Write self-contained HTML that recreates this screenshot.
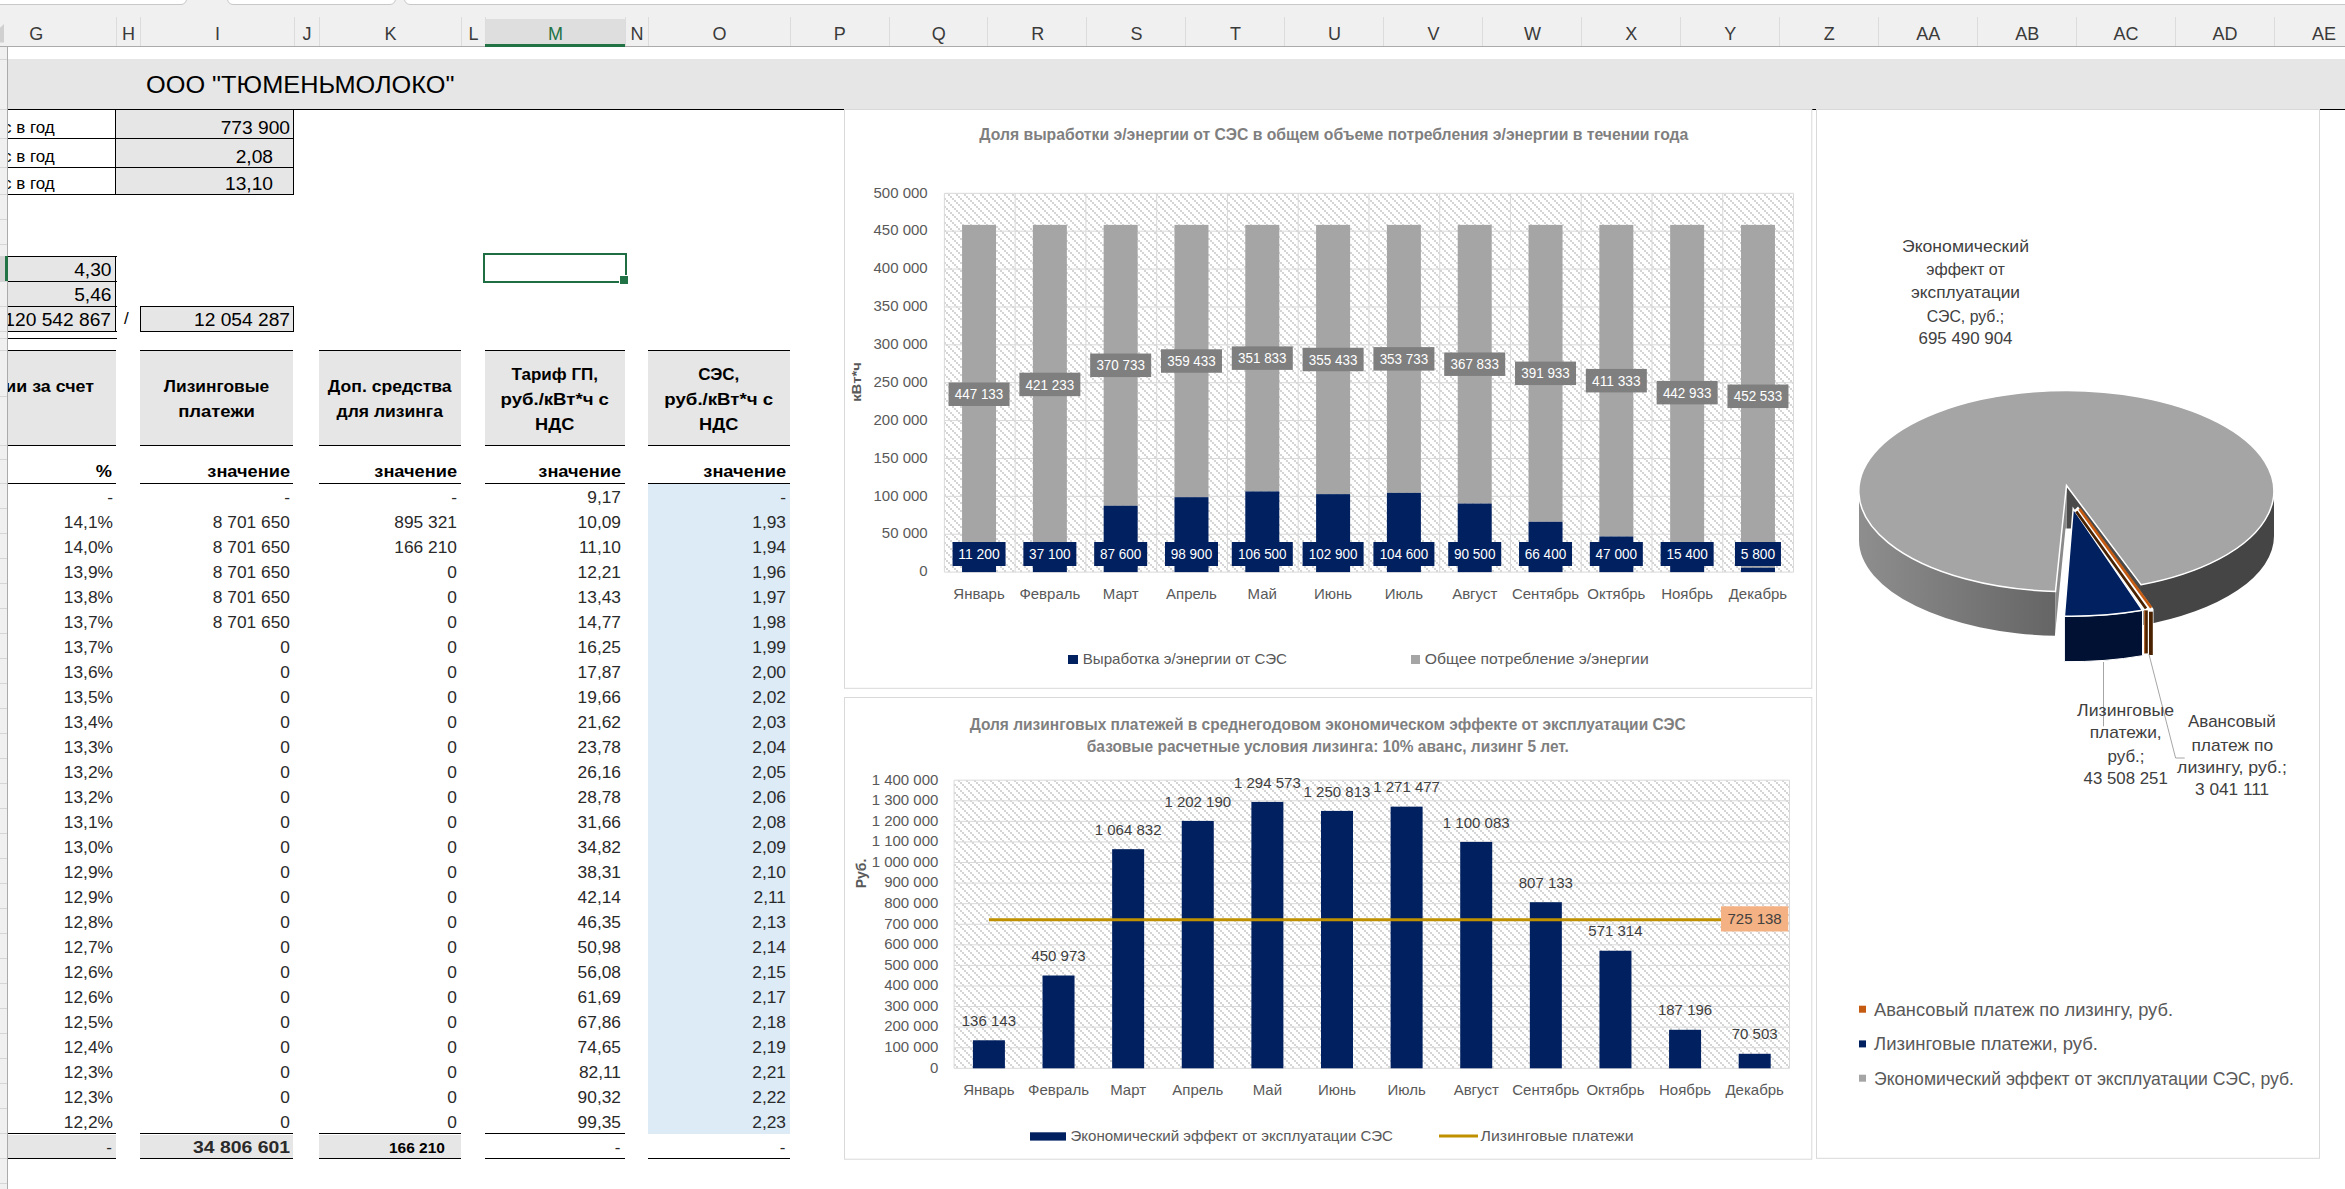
<!DOCTYPE html><html><head><meta charset="utf-8"><style>
html,body{margin:0;padding:0}
body{width:2345px;height:1189px;overflow:hidden;position:relative;background:#fff;font-family:"Liberation Sans",sans-serif;}
.a{position:absolute;white-space:nowrap}
.r{text-align:right}
.c{text-align:center}
.b{font-weight:bold}
</style></head><body>
<div class="a" style="left:0px;top:0px;width:2345px;height:46px;background:#f0f0f0"></div>
<div class="a" style="left:-10px;top:-7px;width:195px;height:10px;background:#fff;border:1px solid #c8c8c8;border-radius:0 0 6px 6px"></div>
<div class="a" style="left:227px;top:-7px;width:167px;height:10px;background:#fff;border:1px solid #c8c8c8;border-radius:0 0 6px 6px"></div>
<div class="a" style="left:404px;top:-7px;width:2000px;height:10px;background:#fff;border:1px solid #c8c8c8;border-radius:0 0 6px 6px"></div>
<div class="a" style="left:485px;top:19px;width:139.5px;height:27px;background:#dedede"></div>
<div class="a" style="left:115.5px;top:17px;width:1px;height:29px;background:#dcdcdc"></div>
<div class="a c" style="left:-43.900000000000006px;top:22px;width:160.2px;font-size:18px;line-height:25px;color:#3a3a3a">G</div>
<div class="a" style="left:140px;top:17px;width:1px;height:29px;background:#dcdcdc"></div>
<div class="a c" style="left:116.3px;top:22px;width:24.5px;font-size:18px;line-height:25px;color:#3a3a3a">H</div>
<div class="a" style="left:293.5px;top:17px;width:1px;height:29px;background:#dcdcdc"></div>
<div class="a c" style="left:140.8px;top:22px;width:153.5px;font-size:18px;line-height:25px;color:#3a3a3a">I</div>
<div class="a" style="left:319px;top:17px;width:1px;height:29px;background:#dcdcdc"></div>
<div class="a c" style="left:294.3px;top:22px;width:25.5px;font-size:18px;line-height:25px;color:#3a3a3a">J</div>
<div class="a" style="left:460.5px;top:17px;width:1px;height:29px;background:#dcdcdc"></div>
<div class="a c" style="left:319.8px;top:22px;width:141.5px;font-size:18px;line-height:25px;color:#3a3a3a">K</div>
<div class="a" style="left:485px;top:17px;width:1px;height:29px;background:#dcdcdc"></div>
<div class="a c" style="left:461.3px;top:22px;width:24.5px;font-size:18px;line-height:25px;color:#3a3a3a">L</div>
<div class="a" style="left:624.5px;top:17px;width:1px;height:29px;background:#dcdcdc"></div>
<div class="a c" style="left:485.8px;top:22px;width:139.5px;font-size:18px;line-height:25px;color:#217346">M</div>
<div class="a" style="left:648px;top:17px;width:1px;height:29px;background:#dcdcdc"></div>
<div class="a c" style="left:625.3px;top:22px;width:23.5px;font-size:18px;line-height:25px;color:#3a3a3a">N</div>
<div class="a" style="left:789.5px;top:17px;width:1px;height:29px;background:#dcdcdc"></div>
<div class="a c" style="left:648.8px;top:22px;width:141.5px;font-size:18px;line-height:25px;color:#3a3a3a">O</div>
<div class="a" style="left:888.5px;top:17px;width:1px;height:29px;background:#dcdcdc"></div>
<div class="a c" style="left:790.3px;top:22px;width:98.95000000000005px;font-size:18px;line-height:25px;color:#3a3a3a">P</div>
<div class="a" style="left:987.4px;top:17px;width:1px;height:29px;background:#dcdcdc"></div>
<div class="a c" style="left:889.25px;top:22px;width:98.95000000000005px;font-size:18px;line-height:25px;color:#3a3a3a">Q</div>
<div class="a" style="left:1086.4px;top:17px;width:1px;height:29px;background:#dcdcdc"></div>
<div class="a c" style="left:988.2px;top:22px;width:98.95000000000005px;font-size:18px;line-height:25px;color:#3a3a3a">R</div>
<div class="a" style="left:1185.3px;top:17px;width:1px;height:29px;background:#dcdcdc"></div>
<div class="a c" style="left:1087.15px;top:22px;width:98.95000000000005px;font-size:18px;line-height:25px;color:#3a3a3a">S</div>
<div class="a" style="left:1284.3px;top:17px;width:1px;height:29px;background:#dcdcdc"></div>
<div class="a c" style="left:1186.1000000000001px;top:22px;width:98.95000000000005px;font-size:18px;line-height:25px;color:#3a3a3a">T</div>
<div class="a" style="left:1383.2px;top:17px;width:1px;height:29px;background:#dcdcdc"></div>
<div class="a c" style="left:1285.0500000000002px;top:22px;width:98.95000000000005px;font-size:18px;line-height:25px;color:#3a3a3a">U</div>
<div class="a" style="left:1482.2px;top:17px;width:1px;height:29px;background:#dcdcdc"></div>
<div class="a c" style="left:1384.0000000000002px;top:22px;width:98.95000000000005px;font-size:18px;line-height:25px;color:#3a3a3a">V</div>
<div class="a" style="left:1581.1px;top:17px;width:1px;height:29px;background:#dcdcdc"></div>
<div class="a c" style="left:1482.9500000000003px;top:22px;width:98.95000000000005px;font-size:18px;line-height:25px;color:#3a3a3a">W</div>
<div class="a" style="left:1680.1px;top:17px;width:1px;height:29px;background:#dcdcdc"></div>
<div class="a c" style="left:1581.9000000000003px;top:22px;width:98.95000000000005px;font-size:18px;line-height:25px;color:#3a3a3a">X</div>
<div class="a" style="left:1779.0px;top:17px;width:1px;height:29px;background:#dcdcdc"></div>
<div class="a c" style="left:1680.8500000000004px;top:22px;width:98.95000000000005px;font-size:18px;line-height:25px;color:#3a3a3a">Y</div>
<div class="a" style="left:1878.0px;top:17px;width:1px;height:29px;background:#dcdcdc"></div>
<div class="a c" style="left:1779.8000000000004px;top:22px;width:98.95000000000005px;font-size:18px;line-height:25px;color:#3a3a3a">Z</div>
<div class="a" style="left:1976.9px;top:17px;width:1px;height:29px;background:#dcdcdc"></div>
<div class="a c" style="left:1878.7500000000005px;top:22px;width:98.95000000000005px;font-size:18px;line-height:25px;color:#3a3a3a">AA</div>
<div class="a" style="left:2075.9px;top:17px;width:1px;height:29px;background:#dcdcdc"></div>
<div class="a c" style="left:1977.7000000000005px;top:22px;width:98.94999999999982px;font-size:18px;line-height:25px;color:#3a3a3a">AB</div>
<div class="a" style="left:2174.8px;top:17px;width:1px;height:29px;background:#dcdcdc"></div>
<div class="a c" style="left:2076.6500000000005px;top:22px;width:98.94999999999982px;font-size:18px;line-height:25px;color:#3a3a3a">AC</div>
<div class="a" style="left:2273.8px;top:17px;width:1px;height:29px;background:#dcdcdc"></div>
<div class="a c" style="left:2175.6000000000004px;top:22px;width:98.94999999999982px;font-size:18px;line-height:25px;color:#3a3a3a">AD</div>
<div class="a" style="left:2372.7px;top:17px;width:1px;height:29px;background:#dcdcdc"></div>
<div class="a c" style="left:2274.55px;top:22px;width:98.94999999999982px;font-size:18px;line-height:25px;color:#3a3a3a">AE</div>
<div class="a" style="left:0px;top:46px;width:2345px;height:1px;background:#ababab"></div>
<div class="a" style="left:485px;top:43.8px;width:139.5px;height:3.1px;background:#217346"></div>
<div class="a" style="left:0;top:24px;width:4px;height:18.5px;background:#d0d0d0;clip-path:polygon(100% 0,100% 100%,0 100%,0 20%)"></div>
<div class="a" style="left:8px;top:59.4px;width:2337px;height:50px;background:#e7e6e6"></div>
<div class="a " style="left:146px;top:67px;font-size:24px;line-height:36px;color:#000;transform:scaleX(1.055);transform-origin:left center">ООО "ТЮМЕНЬМОЛОКО"</div>
<div class="a" style="left:8px;top:109px;width:2337px;height:1px;background:#000"></div>
<div class="a" style="left:115.5px;top:110px;width:178px;height:84.4px;background:#e7e6e6"></div>
<div class="a" style="left:8px;top:138.2px;width:286px;height:1px;background:#000"></div>
<div class="a " style="left:3px;top:116.19999999999999px;font-size:16px;line-height:24px;color:#000;transform:scaleX(1.06);transform-origin:left center">с в год</div>
<div class="a r" style="left:139.5px;top:115.69999999999999px;width:150px;font-size:18px;line-height:24px;color:#000;transform:scaleX(1.066);transform-origin:right center">773 900</div>
<div class="a" style="left:8px;top:167.4px;width:286px;height:1px;background:#000"></div>
<div class="a " style="left:3px;top:145.4px;font-size:16px;line-height:24px;color:#000;transform:scaleX(1.06);transform-origin:left center">с в год</div>
<div class="a r" style="left:123.30000000000001px;top:144.9px;width:150px;font-size:18px;line-height:24px;color:#000;transform:scaleX(1.066);transform-origin:right center">2,08</div>
<div class="a" style="left:8px;top:194.4px;width:286px;height:1px;background:#000"></div>
<div class="a " style="left:3px;top:172.4px;font-size:16px;line-height:24px;color:#000;transform:scaleX(1.06);transform-origin:left center">с в год</div>
<div class="a r" style="left:123.30000000000001px;top:171.9px;width:150px;font-size:18px;line-height:24px;color:#000;transform:scaleX(1.066);transform-origin:right center">13,10</div>
<div class="a" style="left:115px;top:109px;width:1px;height:85.4px;background:#000"></div>
<div class="a" style="left:293px;top:109px;width:1px;height:85.4px;background:#000"></div>
<div class="a" style="left:8px;top:255.5px;width:107.5px;height:75px;background:#e7e6e6"></div>
<div class="a" style="left:8px;top:255.5px;width:108.5px;height:1px;background:#000"></div>
<div class="a" style="left:8px;top:280.5px;width:108.5px;height:1px;background:#000"></div>
<div class="a" style="left:8px;top:305.5px;width:108.5px;height:1px;background:#000"></div>
<div class="a" style="left:8px;top:330.5px;width:108.5px;height:1px;background:#000"></div>
<div class="a" style="left:115px;top:255.5px;width:1px;height:75px;background:#000"></div>
<div class="a r" style="left:0px;top:257.5px;width:111.5px;font-size:18px;line-height:24px;color:#000;transform:scaleX(1.066);transform-origin:right center">4,30</div>
<div class="a r" style="left:0px;top:282.5px;width:111.5px;font-size:18px;line-height:24px;color:#000;transform:scaleX(1.066);transform-origin:right center">5,46</div>
<div class="a r" style="left:-50px;top:307.5px;width:161px;font-size:18px;line-height:24px;color:#000;transform:scaleX(1.066);transform-origin:right center">120 542 867</div>
<div class="a" style="left:8px;top:337.6px;width:108.5px;height:1px;background:#000"></div>
<div class="a " style="left:124px;top:307px;font-size:17px;line-height:24px;color:#000">/</div>
<div class="a" style="left:140.4px;top:305.5px;width:153px;height:25px;background:#e7e6e6;border:1px solid #000;box-sizing:border-box;width:154px;height:26px"></div>
<div class="a r" style="left:139.5px;top:307.5px;width:150px;font-size:18px;line-height:24px;color:#000;transform:scaleX(1.066);transform-origin:right center">12 054 287</div>
<div class="a" style="left:483px;top:253px;width:144px;height:30px;border:2.7px solid #1f6e43;box-sizing:border-box"></div>
<div class="a" style="left:619px;top:275px;width:8px;height:8px;background:#217346;border:1px solid #fff"></div>
<div class="a" style="left:8px;top:350.2px;width:107.5px;height:95px;background:#e7e6e6"></div>
<div class="a" style="left:8px;top:350.2px;width:107.5px;height:1px;background:#000"></div>
<div class="a" style="left:8px;top:445.3px;width:107.5px;height:1px;background:#000"></div>
<div class="a" style="left:8px;top:483.1px;width:107.5px;height:1px;background:#000"></div>
<div class="a" style="left:8px;top:1133px;width:107.5px;height:1px;background:#000"></div>
<div class="a" style="left:8px;top:1134.6px;width:107.5px;height:23.5px;background:#e7e6e6"></div>
<div class="a" style="left:8px;top:1158.2px;width:107.5px;height:1px;background:#000"></div>
<div class="a" style="left:140.4px;top:350.2px;width:153.1px;height:95px;background:#e7e6e6"></div>
<div class="a" style="left:140.4px;top:350.2px;width:153.1px;height:1px;background:#000"></div>
<div class="a" style="left:140.4px;top:445.3px;width:153.1px;height:1px;background:#000"></div>
<div class="a" style="left:140.4px;top:483.1px;width:153.1px;height:1px;background:#000"></div>
<div class="a" style="left:140.4px;top:1133px;width:153.1px;height:1px;background:#000"></div>
<div class="a" style="left:140.4px;top:1134.6px;width:153.1px;height:23.5px;background:#e7e6e6"></div>
<div class="a" style="left:140.4px;top:1158.2px;width:153.1px;height:1px;background:#000"></div>
<div class="a" style="left:319px;top:350.2px;width:141.5px;height:95px;background:#e7e6e6"></div>
<div class="a" style="left:319px;top:350.2px;width:141.5px;height:1px;background:#000"></div>
<div class="a" style="left:319px;top:445.3px;width:141.5px;height:1px;background:#000"></div>
<div class="a" style="left:319px;top:483.1px;width:141.5px;height:1px;background:#000"></div>
<div class="a" style="left:319px;top:1133px;width:141.5px;height:1px;background:#000"></div>
<div class="a" style="left:319px;top:1134.6px;width:141.5px;height:23.5px;background:#e7e6e6"></div>
<div class="a" style="left:319px;top:1158.2px;width:141.5px;height:1px;background:#000"></div>
<div class="a" style="left:485px;top:350.2px;width:139.5px;height:95px;background:#e7e6e6"></div>
<div class="a" style="left:485px;top:350.2px;width:139.5px;height:1px;background:#000"></div>
<div class="a" style="left:485px;top:445.3px;width:139.5px;height:1px;background:#000"></div>
<div class="a" style="left:485px;top:483.1px;width:139.5px;height:1px;background:#000"></div>
<div class="a" style="left:485px;top:1133px;width:139.5px;height:1px;background:#000"></div>
<div class="a" style="left:485px;top:1158.2px;width:139.5px;height:1px;background:#000"></div>
<div class="a" style="left:648px;top:350.2px;width:141.5px;height:95px;background:#e7e6e6"></div>
<div class="a" style="left:648px;top:350.2px;width:141.5px;height:1px;background:#000"></div>
<div class="a" style="left:648px;top:445.3px;width:141.5px;height:1px;background:#000"></div>
<div class="a" style="left:648px;top:483.1px;width:141.5px;height:1px;background:#000"></div>
<div class="a" style="left:648px;top:1133px;width:141.5px;height:1px;background:#000"></div>
<div class="a" style="left:648px;top:1158.2px;width:141.5px;height:1px;background:#000"></div>
<div class="a" style="left:648px;top:484.1px;width:141.5px;height:649.5px;background:#ddebf7"></div>
<div class="a r" style="left:-100px;top:374px;width:194px;font-size:17px;line-height:25px;color:#000;font-weight:bold;transform:scaleX(1.05);transform-origin:right center">ии за счет</div>
<div class="a c" style="left:140.4px;top:374px;width:153px;font-size:17px;line-height:25px;color:#000;font-weight:bold;transform:scaleX(1.02);transform-origin:center center">Лизинговые</div>
<div class="a c" style="left:140.4px;top:399px;width:153px;font-size:17px;line-height:25px;color:#000;font-weight:bold;transform:scaleX(1.087);transform-origin:center center">платежи</div>
<div class="a c" style="left:319px;top:374px;width:141.5px;font-size:17px;line-height:25px;color:#000;font-weight:bold;transform:scaleX(1.034);transform-origin:center center">Доп. средства</div>
<div class="a c" style="left:319px;top:399px;width:141.5px;font-size:17px;line-height:25px;color:#000;font-weight:bold;transform:scaleX(1.03);transform-origin:center center">для лизинга</div>
<div class="a c" style="left:485px;top:361.5px;width:139.5px;font-size:17px;line-height:25px;color:#000;font-weight:bold;transform:scaleX(1.0);transform-origin:center center">Тариф ГП,</div>
<div class="a c" style="left:485px;top:386.5px;width:139.5px;font-size:17px;line-height:25px;color:#000;font-weight:bold;transform:scaleX(1.094);transform-origin:center center">руб./кВт*ч с</div>
<div class="a c" style="left:485px;top:411.5px;width:139.5px;font-size:17px;line-height:25px;color:#000;font-weight:bold;transform:scaleX(1.07);transform-origin:center center">НДС</div>
<div class="a c" style="left:648px;top:361.5px;width:141.5px;font-size:17px;line-height:25px;color:#000;font-weight:bold;transform:scaleX(1.0);transform-origin:center center">СЭС,</div>
<div class="a c" style="left:648px;top:386.5px;width:141.5px;font-size:17px;line-height:25px;color:#000;font-weight:bold;transform:scaleX(1.098);transform-origin:center center">руб./кВт*ч с</div>
<div class="a c" style="left:648px;top:411.5px;width:141.5px;font-size:17px;line-height:25px;color:#000;font-weight:bold;transform:scaleX(1.07);transform-origin:center center">НДС</div>
<div class="a r" style="left:-88.0px;top:459px;width:200px;font-size:17px;line-height:25px;color:#000;font-weight:bold;transform:scaleX(1.07);transform-origin:right center">%</div>
<div class="a r" style="left:90.0px;top:459px;width:200px;font-size:17px;line-height:25px;color:#000;font-weight:bold;transform:scaleX(1.07);transform-origin:right center">значение</div>
<div class="a r" style="left:257.0px;top:459px;width:200px;font-size:17px;line-height:25px;color:#000;font-weight:bold;transform:scaleX(1.07);transform-origin:right center">значение</div>
<div class="a r" style="left:421.0px;top:459px;width:200px;font-size:17px;line-height:25px;color:#000;font-weight:bold;transform:scaleX(1.07);transform-origin:right center">значение</div>
<div class="a r" style="left:586.0px;top:459px;width:200px;font-size:17px;line-height:25px;color:#000;font-weight:bold;transform:scaleX(1.07);transform-origin:right center">значение</div>
<div class="a r" style="left:-37px;top:485.1px;width:150px;font-size:17px;line-height:25px;color:#2a2a2a;transform:scaleX(1.02);transform-origin:right center">-</div>
<div class="a r" style="left:139.60000000000002px;top:485.1px;width:150px;font-size:17px;line-height:25px;color:#2a2a2a;transform:scaleX(1.02);transform-origin:right center">-</div>
<div class="a r" style="left:306.5px;top:485.1px;width:150px;font-size:17px;line-height:25px;color:#2a2a2a;transform:scaleX(1.02);transform-origin:right center">-</div>
<div class="a r" style="left:470.5px;top:485.1px;width:150px;font-size:17px;line-height:25px;color:#2a2a2a;transform:scaleX(1.02);transform-origin:right center">9,17</div>
<div class="a r" style="left:635.5px;top:485.1px;width:150px;font-size:17px;line-height:25px;color:#2a2a2a;transform:scaleX(1.02);transform-origin:right center">-</div>
<div class="a r" style="left:-37px;top:510.1px;width:150px;font-size:17px;line-height:25px;color:#2a2a2a;transform:scaleX(1.02);transform-origin:right center">14,1%</div>
<div class="a r" style="left:139.60000000000002px;top:510.1px;width:150px;font-size:17px;line-height:25px;color:#2a2a2a;transform:scaleX(1.02);transform-origin:right center">8 701 650</div>
<div class="a r" style="left:306.5px;top:510.1px;width:150px;font-size:17px;line-height:25px;color:#2a2a2a;transform:scaleX(1.02);transform-origin:right center">895 321</div>
<div class="a r" style="left:470.5px;top:510.1px;width:150px;font-size:17px;line-height:25px;color:#2a2a2a;transform:scaleX(1.02);transform-origin:right center">10,09</div>
<div class="a r" style="left:635.5px;top:510.1px;width:150px;font-size:17px;line-height:25px;color:#2a2a2a;transform:scaleX(1.02);transform-origin:right center">1,93</div>
<div class="a r" style="left:-37px;top:535.1px;width:150px;font-size:17px;line-height:25px;color:#2a2a2a;transform:scaleX(1.02);transform-origin:right center">14,0%</div>
<div class="a r" style="left:139.60000000000002px;top:535.1px;width:150px;font-size:17px;line-height:25px;color:#2a2a2a;transform:scaleX(1.02);transform-origin:right center">8 701 650</div>
<div class="a r" style="left:306.5px;top:535.1px;width:150px;font-size:17px;line-height:25px;color:#2a2a2a;transform:scaleX(1.02);transform-origin:right center">166 210</div>
<div class="a r" style="left:470.5px;top:535.1px;width:150px;font-size:17px;line-height:25px;color:#2a2a2a;transform:scaleX(1.02);transform-origin:right center">11,10</div>
<div class="a r" style="left:635.5px;top:535.1px;width:150px;font-size:17px;line-height:25px;color:#2a2a2a;transform:scaleX(1.02);transform-origin:right center">1,94</div>
<div class="a r" style="left:-37px;top:560.1px;width:150px;font-size:17px;line-height:25px;color:#2a2a2a;transform:scaleX(1.02);transform-origin:right center">13,9%</div>
<div class="a r" style="left:139.60000000000002px;top:560.1px;width:150px;font-size:17px;line-height:25px;color:#2a2a2a;transform:scaleX(1.02);transform-origin:right center">8 701 650</div>
<div class="a r" style="left:306.5px;top:560.1px;width:150px;font-size:17px;line-height:25px;color:#2a2a2a;transform:scaleX(1.02);transform-origin:right center">0</div>
<div class="a r" style="left:470.5px;top:560.1px;width:150px;font-size:17px;line-height:25px;color:#2a2a2a;transform:scaleX(1.02);transform-origin:right center">12,21</div>
<div class="a r" style="left:635.5px;top:560.1px;width:150px;font-size:17px;line-height:25px;color:#2a2a2a;transform:scaleX(1.02);transform-origin:right center">1,96</div>
<div class="a r" style="left:-37px;top:585.1px;width:150px;font-size:17px;line-height:25px;color:#2a2a2a;transform:scaleX(1.02);transform-origin:right center">13,8%</div>
<div class="a r" style="left:139.60000000000002px;top:585.1px;width:150px;font-size:17px;line-height:25px;color:#2a2a2a;transform:scaleX(1.02);transform-origin:right center">8 701 650</div>
<div class="a r" style="left:306.5px;top:585.1px;width:150px;font-size:17px;line-height:25px;color:#2a2a2a;transform:scaleX(1.02);transform-origin:right center">0</div>
<div class="a r" style="left:470.5px;top:585.1px;width:150px;font-size:17px;line-height:25px;color:#2a2a2a;transform:scaleX(1.02);transform-origin:right center">13,43</div>
<div class="a r" style="left:635.5px;top:585.1px;width:150px;font-size:17px;line-height:25px;color:#2a2a2a;transform:scaleX(1.02);transform-origin:right center">1,97</div>
<div class="a r" style="left:-37px;top:610.1px;width:150px;font-size:17px;line-height:25px;color:#2a2a2a;transform:scaleX(1.02);transform-origin:right center">13,7%</div>
<div class="a r" style="left:139.60000000000002px;top:610.1px;width:150px;font-size:17px;line-height:25px;color:#2a2a2a;transform:scaleX(1.02);transform-origin:right center">8 701 650</div>
<div class="a r" style="left:306.5px;top:610.1px;width:150px;font-size:17px;line-height:25px;color:#2a2a2a;transform:scaleX(1.02);transform-origin:right center">0</div>
<div class="a r" style="left:470.5px;top:610.1px;width:150px;font-size:17px;line-height:25px;color:#2a2a2a;transform:scaleX(1.02);transform-origin:right center">14,77</div>
<div class="a r" style="left:635.5px;top:610.1px;width:150px;font-size:17px;line-height:25px;color:#2a2a2a;transform:scaleX(1.02);transform-origin:right center">1,98</div>
<div class="a r" style="left:-37px;top:635.1px;width:150px;font-size:17px;line-height:25px;color:#2a2a2a;transform:scaleX(1.02);transform-origin:right center">13,7%</div>
<div class="a r" style="left:139.60000000000002px;top:635.1px;width:150px;font-size:17px;line-height:25px;color:#2a2a2a;transform:scaleX(1.02);transform-origin:right center">0</div>
<div class="a r" style="left:306.5px;top:635.1px;width:150px;font-size:17px;line-height:25px;color:#2a2a2a;transform:scaleX(1.02);transform-origin:right center">0</div>
<div class="a r" style="left:470.5px;top:635.1px;width:150px;font-size:17px;line-height:25px;color:#2a2a2a;transform:scaleX(1.02);transform-origin:right center">16,25</div>
<div class="a r" style="left:635.5px;top:635.1px;width:150px;font-size:17px;line-height:25px;color:#2a2a2a;transform:scaleX(1.02);transform-origin:right center">1,99</div>
<div class="a r" style="left:-37px;top:660.1px;width:150px;font-size:17px;line-height:25px;color:#2a2a2a;transform:scaleX(1.02);transform-origin:right center">13,6%</div>
<div class="a r" style="left:139.60000000000002px;top:660.1px;width:150px;font-size:17px;line-height:25px;color:#2a2a2a;transform:scaleX(1.02);transform-origin:right center">0</div>
<div class="a r" style="left:306.5px;top:660.1px;width:150px;font-size:17px;line-height:25px;color:#2a2a2a;transform:scaleX(1.02);transform-origin:right center">0</div>
<div class="a r" style="left:470.5px;top:660.1px;width:150px;font-size:17px;line-height:25px;color:#2a2a2a;transform:scaleX(1.02);transform-origin:right center">17,87</div>
<div class="a r" style="left:635.5px;top:660.1px;width:150px;font-size:17px;line-height:25px;color:#2a2a2a;transform:scaleX(1.02);transform-origin:right center">2,00</div>
<div class="a r" style="left:-37px;top:685.1px;width:150px;font-size:17px;line-height:25px;color:#2a2a2a;transform:scaleX(1.02);transform-origin:right center">13,5%</div>
<div class="a r" style="left:139.60000000000002px;top:685.1px;width:150px;font-size:17px;line-height:25px;color:#2a2a2a;transform:scaleX(1.02);transform-origin:right center">0</div>
<div class="a r" style="left:306.5px;top:685.1px;width:150px;font-size:17px;line-height:25px;color:#2a2a2a;transform:scaleX(1.02);transform-origin:right center">0</div>
<div class="a r" style="left:470.5px;top:685.1px;width:150px;font-size:17px;line-height:25px;color:#2a2a2a;transform:scaleX(1.02);transform-origin:right center">19,66</div>
<div class="a r" style="left:635.5px;top:685.1px;width:150px;font-size:17px;line-height:25px;color:#2a2a2a;transform:scaleX(1.02);transform-origin:right center">2,02</div>
<div class="a r" style="left:-37px;top:710.1px;width:150px;font-size:17px;line-height:25px;color:#2a2a2a;transform:scaleX(1.02);transform-origin:right center">13,4%</div>
<div class="a r" style="left:139.60000000000002px;top:710.1px;width:150px;font-size:17px;line-height:25px;color:#2a2a2a;transform:scaleX(1.02);transform-origin:right center">0</div>
<div class="a r" style="left:306.5px;top:710.1px;width:150px;font-size:17px;line-height:25px;color:#2a2a2a;transform:scaleX(1.02);transform-origin:right center">0</div>
<div class="a r" style="left:470.5px;top:710.1px;width:150px;font-size:17px;line-height:25px;color:#2a2a2a;transform:scaleX(1.02);transform-origin:right center">21,62</div>
<div class="a r" style="left:635.5px;top:710.1px;width:150px;font-size:17px;line-height:25px;color:#2a2a2a;transform:scaleX(1.02);transform-origin:right center">2,03</div>
<div class="a r" style="left:-37px;top:735.1px;width:150px;font-size:17px;line-height:25px;color:#2a2a2a;transform:scaleX(1.02);transform-origin:right center">13,3%</div>
<div class="a r" style="left:139.60000000000002px;top:735.1px;width:150px;font-size:17px;line-height:25px;color:#2a2a2a;transform:scaleX(1.02);transform-origin:right center">0</div>
<div class="a r" style="left:306.5px;top:735.1px;width:150px;font-size:17px;line-height:25px;color:#2a2a2a;transform:scaleX(1.02);transform-origin:right center">0</div>
<div class="a r" style="left:470.5px;top:735.1px;width:150px;font-size:17px;line-height:25px;color:#2a2a2a;transform:scaleX(1.02);transform-origin:right center">23,78</div>
<div class="a r" style="left:635.5px;top:735.1px;width:150px;font-size:17px;line-height:25px;color:#2a2a2a;transform:scaleX(1.02);transform-origin:right center">2,04</div>
<div class="a r" style="left:-37px;top:760.1px;width:150px;font-size:17px;line-height:25px;color:#2a2a2a;transform:scaleX(1.02);transform-origin:right center">13,2%</div>
<div class="a r" style="left:139.60000000000002px;top:760.1px;width:150px;font-size:17px;line-height:25px;color:#2a2a2a;transform:scaleX(1.02);transform-origin:right center">0</div>
<div class="a r" style="left:306.5px;top:760.1px;width:150px;font-size:17px;line-height:25px;color:#2a2a2a;transform:scaleX(1.02);transform-origin:right center">0</div>
<div class="a r" style="left:470.5px;top:760.1px;width:150px;font-size:17px;line-height:25px;color:#2a2a2a;transform:scaleX(1.02);transform-origin:right center">26,16</div>
<div class="a r" style="left:635.5px;top:760.1px;width:150px;font-size:17px;line-height:25px;color:#2a2a2a;transform:scaleX(1.02);transform-origin:right center">2,05</div>
<div class="a r" style="left:-37px;top:785.1px;width:150px;font-size:17px;line-height:25px;color:#2a2a2a;transform:scaleX(1.02);transform-origin:right center">13,2%</div>
<div class="a r" style="left:139.60000000000002px;top:785.1px;width:150px;font-size:17px;line-height:25px;color:#2a2a2a;transform:scaleX(1.02);transform-origin:right center">0</div>
<div class="a r" style="left:306.5px;top:785.1px;width:150px;font-size:17px;line-height:25px;color:#2a2a2a;transform:scaleX(1.02);transform-origin:right center">0</div>
<div class="a r" style="left:470.5px;top:785.1px;width:150px;font-size:17px;line-height:25px;color:#2a2a2a;transform:scaleX(1.02);transform-origin:right center">28,78</div>
<div class="a r" style="left:635.5px;top:785.1px;width:150px;font-size:17px;line-height:25px;color:#2a2a2a;transform:scaleX(1.02);transform-origin:right center">2,06</div>
<div class="a r" style="left:-37px;top:810.1px;width:150px;font-size:17px;line-height:25px;color:#2a2a2a;transform:scaleX(1.02);transform-origin:right center">13,1%</div>
<div class="a r" style="left:139.60000000000002px;top:810.1px;width:150px;font-size:17px;line-height:25px;color:#2a2a2a;transform:scaleX(1.02);transform-origin:right center">0</div>
<div class="a r" style="left:306.5px;top:810.1px;width:150px;font-size:17px;line-height:25px;color:#2a2a2a;transform:scaleX(1.02);transform-origin:right center">0</div>
<div class="a r" style="left:470.5px;top:810.1px;width:150px;font-size:17px;line-height:25px;color:#2a2a2a;transform:scaleX(1.02);transform-origin:right center">31,66</div>
<div class="a r" style="left:635.5px;top:810.1px;width:150px;font-size:17px;line-height:25px;color:#2a2a2a;transform:scaleX(1.02);transform-origin:right center">2,08</div>
<div class="a r" style="left:-37px;top:835.1px;width:150px;font-size:17px;line-height:25px;color:#2a2a2a;transform:scaleX(1.02);transform-origin:right center">13,0%</div>
<div class="a r" style="left:139.60000000000002px;top:835.1px;width:150px;font-size:17px;line-height:25px;color:#2a2a2a;transform:scaleX(1.02);transform-origin:right center">0</div>
<div class="a r" style="left:306.5px;top:835.1px;width:150px;font-size:17px;line-height:25px;color:#2a2a2a;transform:scaleX(1.02);transform-origin:right center">0</div>
<div class="a r" style="left:470.5px;top:835.1px;width:150px;font-size:17px;line-height:25px;color:#2a2a2a;transform:scaleX(1.02);transform-origin:right center">34,82</div>
<div class="a r" style="left:635.5px;top:835.1px;width:150px;font-size:17px;line-height:25px;color:#2a2a2a;transform:scaleX(1.02);transform-origin:right center">2,09</div>
<div class="a r" style="left:-37px;top:860.1px;width:150px;font-size:17px;line-height:25px;color:#2a2a2a;transform:scaleX(1.02);transform-origin:right center">12,9%</div>
<div class="a r" style="left:139.60000000000002px;top:860.1px;width:150px;font-size:17px;line-height:25px;color:#2a2a2a;transform:scaleX(1.02);transform-origin:right center">0</div>
<div class="a r" style="left:306.5px;top:860.1px;width:150px;font-size:17px;line-height:25px;color:#2a2a2a;transform:scaleX(1.02);transform-origin:right center">0</div>
<div class="a r" style="left:470.5px;top:860.1px;width:150px;font-size:17px;line-height:25px;color:#2a2a2a;transform:scaleX(1.02);transform-origin:right center">38,31</div>
<div class="a r" style="left:635.5px;top:860.1px;width:150px;font-size:17px;line-height:25px;color:#2a2a2a;transform:scaleX(1.02);transform-origin:right center">2,10</div>
<div class="a r" style="left:-37px;top:885.1px;width:150px;font-size:17px;line-height:25px;color:#2a2a2a;transform:scaleX(1.02);transform-origin:right center">12,9%</div>
<div class="a r" style="left:139.60000000000002px;top:885.1px;width:150px;font-size:17px;line-height:25px;color:#2a2a2a;transform:scaleX(1.02);transform-origin:right center">0</div>
<div class="a r" style="left:306.5px;top:885.1px;width:150px;font-size:17px;line-height:25px;color:#2a2a2a;transform:scaleX(1.02);transform-origin:right center">0</div>
<div class="a r" style="left:470.5px;top:885.1px;width:150px;font-size:17px;line-height:25px;color:#2a2a2a;transform:scaleX(1.02);transform-origin:right center">42,14</div>
<div class="a r" style="left:635.5px;top:885.1px;width:150px;font-size:17px;line-height:25px;color:#2a2a2a;transform:scaleX(1.02);transform-origin:right center">2,11</div>
<div class="a r" style="left:-37px;top:910.1px;width:150px;font-size:17px;line-height:25px;color:#2a2a2a;transform:scaleX(1.02);transform-origin:right center">12,8%</div>
<div class="a r" style="left:139.60000000000002px;top:910.1px;width:150px;font-size:17px;line-height:25px;color:#2a2a2a;transform:scaleX(1.02);transform-origin:right center">0</div>
<div class="a r" style="left:306.5px;top:910.1px;width:150px;font-size:17px;line-height:25px;color:#2a2a2a;transform:scaleX(1.02);transform-origin:right center">0</div>
<div class="a r" style="left:470.5px;top:910.1px;width:150px;font-size:17px;line-height:25px;color:#2a2a2a;transform:scaleX(1.02);transform-origin:right center">46,35</div>
<div class="a r" style="left:635.5px;top:910.1px;width:150px;font-size:17px;line-height:25px;color:#2a2a2a;transform:scaleX(1.02);transform-origin:right center">2,13</div>
<div class="a r" style="left:-37px;top:935.1px;width:150px;font-size:17px;line-height:25px;color:#2a2a2a;transform:scaleX(1.02);transform-origin:right center">12,7%</div>
<div class="a r" style="left:139.60000000000002px;top:935.1px;width:150px;font-size:17px;line-height:25px;color:#2a2a2a;transform:scaleX(1.02);transform-origin:right center">0</div>
<div class="a r" style="left:306.5px;top:935.1px;width:150px;font-size:17px;line-height:25px;color:#2a2a2a;transform:scaleX(1.02);transform-origin:right center">0</div>
<div class="a r" style="left:470.5px;top:935.1px;width:150px;font-size:17px;line-height:25px;color:#2a2a2a;transform:scaleX(1.02);transform-origin:right center">50,98</div>
<div class="a r" style="left:635.5px;top:935.1px;width:150px;font-size:17px;line-height:25px;color:#2a2a2a;transform:scaleX(1.02);transform-origin:right center">2,14</div>
<div class="a r" style="left:-37px;top:960.1px;width:150px;font-size:17px;line-height:25px;color:#2a2a2a;transform:scaleX(1.02);transform-origin:right center">12,6%</div>
<div class="a r" style="left:139.60000000000002px;top:960.1px;width:150px;font-size:17px;line-height:25px;color:#2a2a2a;transform:scaleX(1.02);transform-origin:right center">0</div>
<div class="a r" style="left:306.5px;top:960.1px;width:150px;font-size:17px;line-height:25px;color:#2a2a2a;transform:scaleX(1.02);transform-origin:right center">0</div>
<div class="a r" style="left:470.5px;top:960.1px;width:150px;font-size:17px;line-height:25px;color:#2a2a2a;transform:scaleX(1.02);transform-origin:right center">56,08</div>
<div class="a r" style="left:635.5px;top:960.1px;width:150px;font-size:17px;line-height:25px;color:#2a2a2a;transform:scaleX(1.02);transform-origin:right center">2,15</div>
<div class="a r" style="left:-37px;top:985.1px;width:150px;font-size:17px;line-height:25px;color:#2a2a2a;transform:scaleX(1.02);transform-origin:right center">12,6%</div>
<div class="a r" style="left:139.60000000000002px;top:985.1px;width:150px;font-size:17px;line-height:25px;color:#2a2a2a;transform:scaleX(1.02);transform-origin:right center">0</div>
<div class="a r" style="left:306.5px;top:985.1px;width:150px;font-size:17px;line-height:25px;color:#2a2a2a;transform:scaleX(1.02);transform-origin:right center">0</div>
<div class="a r" style="left:470.5px;top:985.1px;width:150px;font-size:17px;line-height:25px;color:#2a2a2a;transform:scaleX(1.02);transform-origin:right center">61,69</div>
<div class="a r" style="left:635.5px;top:985.1px;width:150px;font-size:17px;line-height:25px;color:#2a2a2a;transform:scaleX(1.02);transform-origin:right center">2,17</div>
<div class="a r" style="left:-37px;top:1010.1px;width:150px;font-size:17px;line-height:25px;color:#2a2a2a;transform:scaleX(1.02);transform-origin:right center">12,5%</div>
<div class="a r" style="left:139.60000000000002px;top:1010.1px;width:150px;font-size:17px;line-height:25px;color:#2a2a2a;transform:scaleX(1.02);transform-origin:right center">0</div>
<div class="a r" style="left:306.5px;top:1010.1px;width:150px;font-size:17px;line-height:25px;color:#2a2a2a;transform:scaleX(1.02);transform-origin:right center">0</div>
<div class="a r" style="left:470.5px;top:1010.1px;width:150px;font-size:17px;line-height:25px;color:#2a2a2a;transform:scaleX(1.02);transform-origin:right center">67,86</div>
<div class="a r" style="left:635.5px;top:1010.1px;width:150px;font-size:17px;line-height:25px;color:#2a2a2a;transform:scaleX(1.02);transform-origin:right center">2,18</div>
<div class="a r" style="left:-37px;top:1035.1px;width:150px;font-size:17px;line-height:25px;color:#2a2a2a;transform:scaleX(1.02);transform-origin:right center">12,4%</div>
<div class="a r" style="left:139.60000000000002px;top:1035.1px;width:150px;font-size:17px;line-height:25px;color:#2a2a2a;transform:scaleX(1.02);transform-origin:right center">0</div>
<div class="a r" style="left:306.5px;top:1035.1px;width:150px;font-size:17px;line-height:25px;color:#2a2a2a;transform:scaleX(1.02);transform-origin:right center">0</div>
<div class="a r" style="left:470.5px;top:1035.1px;width:150px;font-size:17px;line-height:25px;color:#2a2a2a;transform:scaleX(1.02);transform-origin:right center">74,65</div>
<div class="a r" style="left:635.5px;top:1035.1px;width:150px;font-size:17px;line-height:25px;color:#2a2a2a;transform:scaleX(1.02);transform-origin:right center">2,19</div>
<div class="a r" style="left:-37px;top:1060.1px;width:150px;font-size:17px;line-height:25px;color:#2a2a2a;transform:scaleX(1.02);transform-origin:right center">12,3%</div>
<div class="a r" style="left:139.60000000000002px;top:1060.1px;width:150px;font-size:17px;line-height:25px;color:#2a2a2a;transform:scaleX(1.02);transform-origin:right center">0</div>
<div class="a r" style="left:306.5px;top:1060.1px;width:150px;font-size:17px;line-height:25px;color:#2a2a2a;transform:scaleX(1.02);transform-origin:right center">0</div>
<div class="a r" style="left:470.5px;top:1060.1px;width:150px;font-size:17px;line-height:25px;color:#2a2a2a;transform:scaleX(1.02);transform-origin:right center">82,11</div>
<div class="a r" style="left:635.5px;top:1060.1px;width:150px;font-size:17px;line-height:25px;color:#2a2a2a;transform:scaleX(1.02);transform-origin:right center">2,21</div>
<div class="a r" style="left:-37px;top:1085.1px;width:150px;font-size:17px;line-height:25px;color:#2a2a2a;transform:scaleX(1.02);transform-origin:right center">12,3%</div>
<div class="a r" style="left:139.60000000000002px;top:1085.1px;width:150px;font-size:17px;line-height:25px;color:#2a2a2a;transform:scaleX(1.02);transform-origin:right center">0</div>
<div class="a r" style="left:306.5px;top:1085.1px;width:150px;font-size:17px;line-height:25px;color:#2a2a2a;transform:scaleX(1.02);transform-origin:right center">0</div>
<div class="a r" style="left:470.5px;top:1085.1px;width:150px;font-size:17px;line-height:25px;color:#2a2a2a;transform:scaleX(1.02);transform-origin:right center">90,32</div>
<div class="a r" style="left:635.5px;top:1085.1px;width:150px;font-size:17px;line-height:25px;color:#2a2a2a;transform:scaleX(1.02);transform-origin:right center">2,22</div>
<div class="a r" style="left:-37px;top:1110.1px;width:150px;font-size:17px;line-height:25px;color:#2a2a2a;transform:scaleX(1.02);transform-origin:right center">12,2%</div>
<div class="a r" style="left:139.60000000000002px;top:1110.1px;width:150px;font-size:17px;line-height:25px;color:#2a2a2a;transform:scaleX(1.02);transform-origin:right center">0</div>
<div class="a r" style="left:306.5px;top:1110.1px;width:150px;font-size:17px;line-height:25px;color:#2a2a2a;transform:scaleX(1.02);transform-origin:right center">0</div>
<div class="a r" style="left:470.5px;top:1110.1px;width:150px;font-size:17px;line-height:25px;color:#2a2a2a;transform:scaleX(1.02);transform-origin:right center">99,35</div>
<div class="a r" style="left:635.5px;top:1110.1px;width:150px;font-size:17px;line-height:25px;color:#2a2a2a;transform:scaleX(1.02);transform-origin:right center">2,23</div>
<div class="a r" style="left:-38px;top:1134.5px;width:150px;font-size:17px;line-height:25px;color:#2a2a2a">-</div>
<div class="a r" style="left:139.60000000000002px;top:1134.5px;width:150px;font-size:17px;line-height:25px;color:#2a2a2a;font-weight:bold;transform:scaleX(1.14);transform-origin:right center">34 806 601</div>
<div class="a r" style="left:294.5px;top:1136.0px;width:150px;font-size:14.5px;line-height:25px;color:#000;font-weight:bold;transform:scaleX(1.07);transform-origin:right center">166 210</div>
<div class="a r" style="left:470.5px;top:1134.5px;width:150px;font-size:17px;line-height:25px;color:#2a2a2a">-</div>
<div class="a r" style="left:635.5px;top:1134.5px;width:150px;font-size:17px;line-height:25px;color:#2a2a2a">-</div>
<div class="a" style="left:0px;top:47px;width:7px;height:1142px;background:#f0f0f0"></div>
<div class="a" style="left:7px;top:47px;width:1px;height:1142px;background:#ababab"></div>
<div class="a" style="left:0px;top:59.4px;width:7px;height:1px;background:#d6d6d6"></div>
<div class="a" style="left:0px;top:109px;width:7px;height:1px;background:#d6d6d6"></div>
<div class="a" style="left:0px;top:138.2px;width:7px;height:1px;background:#d6d6d6"></div>
<div class="a" style="left:0px;top:167.4px;width:7px;height:1px;background:#d6d6d6"></div>
<div class="a" style="left:0px;top:194.4px;width:7px;height:1px;background:#d6d6d6"></div>
<div class="a" style="left:0px;top:219.3px;width:7px;height:1px;background:#d6d6d6"></div>
<div class="a" style="left:0px;top:244.2px;width:7px;height:1px;background:#d6d6d6"></div>
<div class="a" style="left:0px;top:255.5px;width:7px;height:1px;background:#d6d6d6"></div>
<div class="a" style="left:0px;top:280.5px;width:7px;height:1px;background:#d6d6d6"></div>
<div class="a" style="left:0px;top:305.5px;width:7px;height:1px;background:#d6d6d6"></div>
<div class="a" style="left:0px;top:330.5px;width:7px;height:1px;background:#d6d6d6"></div>
<div class="a" style="left:0px;top:337.6px;width:7px;height:1px;background:#d6d6d6"></div>
<div class="a" style="left:0px;top:350.2px;width:7px;height:1px;background:#d6d6d6"></div>
<div class="a" style="left:0px;top:395.6px;width:7px;height:1px;background:#d6d6d6"></div>
<div class="a" style="left:0px;top:445.3px;width:7px;height:1px;background:#d6d6d6"></div>
<div class="a" style="left:0px;top:458.7px;width:7px;height:1px;background:#d6d6d6"></div>
<div class="a" style="left:0px;top:483.1px;width:7px;height:1px;background:#d6d6d6"></div>
<div class="a" style="left:0px;top:508.1px;width:7px;height:1px;background:#d6d6d6"></div>
<div class="a" style="left:0px;top:533.1px;width:7px;height:1px;background:#d6d6d6"></div>
<div class="a" style="left:0px;top:558.1px;width:7px;height:1px;background:#d6d6d6"></div>
<div class="a" style="left:0px;top:583.1px;width:7px;height:1px;background:#d6d6d6"></div>
<div class="a" style="left:0px;top:608.1px;width:7px;height:1px;background:#d6d6d6"></div>
<div class="a" style="left:0px;top:633.1px;width:7px;height:1px;background:#d6d6d6"></div>
<div class="a" style="left:0px;top:658.1px;width:7px;height:1px;background:#d6d6d6"></div>
<div class="a" style="left:0px;top:683.1px;width:7px;height:1px;background:#d6d6d6"></div>
<div class="a" style="left:0px;top:708.1px;width:7px;height:1px;background:#d6d6d6"></div>
<div class="a" style="left:0px;top:733.1px;width:7px;height:1px;background:#d6d6d6"></div>
<div class="a" style="left:0px;top:758.1px;width:7px;height:1px;background:#d6d6d6"></div>
<div class="a" style="left:0px;top:783.1px;width:7px;height:1px;background:#d6d6d6"></div>
<div class="a" style="left:0px;top:808.1px;width:7px;height:1px;background:#d6d6d6"></div>
<div class="a" style="left:0px;top:833.1px;width:7px;height:1px;background:#d6d6d6"></div>
<div class="a" style="left:0px;top:858.1px;width:7px;height:1px;background:#d6d6d6"></div>
<div class="a" style="left:0px;top:883.1px;width:7px;height:1px;background:#d6d6d6"></div>
<div class="a" style="left:0px;top:908.1px;width:7px;height:1px;background:#d6d6d6"></div>
<div class="a" style="left:0px;top:933.1px;width:7px;height:1px;background:#d6d6d6"></div>
<div class="a" style="left:0px;top:958.1px;width:7px;height:1px;background:#d6d6d6"></div>
<div class="a" style="left:0px;top:983.1px;width:7px;height:1px;background:#d6d6d6"></div>
<div class="a" style="left:0px;top:1008.1px;width:7px;height:1px;background:#d6d6d6"></div>
<div class="a" style="left:0px;top:1033.1px;width:7px;height:1px;background:#d6d6d6"></div>
<div class="a" style="left:0px;top:1058.1px;width:7px;height:1px;background:#d6d6d6"></div>
<div class="a" style="left:0px;top:1083.1px;width:7px;height:1px;background:#d6d6d6"></div>
<div class="a" style="left:0px;top:1108.1px;width:7px;height:1px;background:#d6d6d6"></div>
<div class="a" style="left:0px;top:1133.1px;width:7px;height:1px;background:#d6d6d6"></div>
<div class="a" style="left:0px;top:1158.1px;width:7px;height:1px;background:#d6d6d6"></div>
<div class="a" style="left:0px;top:1183.1px;width:7px;height:1px;background:#d6d6d6"></div>
<div class="a" style="left:0px;top:255.5px;width:7px;height:25px;background:#d3d3d3"></div>
<div class="a" style="left:5px;top:255.5px;width:3px;height:25px;background:#217346"></div>
<svg class="a" style="left:0;top:0" width="2345" height="1189" viewBox="0 0 2345 1189" font-family="Liberation Sans, sans-serif">
<defs><pattern id="hatch" width="8" height="8" patternUnits="userSpaceOnUse">
<rect width="8" height="8" fill="#fff"/>
<rect x="2" y="0" width="2" height="2" fill="#d5d5d5"/><rect x="4" y="2" width="2" height="2" fill="#d5d5d5"/>
<rect x="6" y="4" width="2" height="2" fill="#d5d5d5"/><rect x="0" y="6" width="2" height="2" fill="#d5d5d5"/>
</pattern>
<linearGradient id="pieL" x1="0" x2="1" y1="0" y2="0"><stop offset="0" stop-color="#8e8e8e"/><stop offset="1" stop-color="#656565"/></linearGradient>
</defs>
<rect x="844.5" y="109.5" width="967.3" height="578.8" fill="#fff" stroke="#d9d9d9" stroke-width="1"/>
<text x="1333.85" y="140.00" font-size="16" fill="#7f7f7f" text-anchor="middle" font-weight="bold" textLength="709" lengthAdjust="spacingAndGlyphs">Доля выработки э/энергии от СЭС в общем объеме потребления э/энергии в течении года</text>
<rect x="944.4" y="193.3" width="849.1" height="378.8" fill="url(#hatch)"/>
<line x1="944.4" x2="1793.5" y1="572.10" y2="572.10" stroke="#d9d9d9" stroke-width="1"/>
<text x="927.70" y="576.30" font-size="15" fill="#595959" text-anchor="end" font-weight="normal" >0</text>
<line x1="944.4" x2="1793.5" y1="534.22" y2="534.22" stroke="#d9d9d9" stroke-width="1"/>
<text x="927.70" y="538.42" font-size="15" fill="#595959" text-anchor="end" font-weight="normal" >50 000</text>
<line x1="944.4" x2="1793.5" y1="496.34" y2="496.34" stroke="#d9d9d9" stroke-width="1"/>
<text x="927.70" y="500.54" font-size="15" fill="#595959" text-anchor="end" font-weight="normal" >100 000</text>
<line x1="944.4" x2="1793.5" y1="458.46" y2="458.46" stroke="#d9d9d9" stroke-width="1"/>
<text x="927.70" y="462.66" font-size="15" fill="#595959" text-anchor="end" font-weight="normal" >150 000</text>
<line x1="944.4" x2="1793.5" y1="420.58" y2="420.58" stroke="#d9d9d9" stroke-width="1"/>
<text x="927.70" y="424.78" font-size="15" fill="#595959" text-anchor="end" font-weight="normal" >200 000</text>
<line x1="944.4" x2="1793.5" y1="382.70" y2="382.70" stroke="#d9d9d9" stroke-width="1"/>
<text x="927.70" y="386.90" font-size="15" fill="#595959" text-anchor="end" font-weight="normal" >250 000</text>
<line x1="944.4" x2="1793.5" y1="344.82" y2="344.82" stroke="#d9d9d9" stroke-width="1"/>
<text x="927.70" y="349.02" font-size="15" fill="#595959" text-anchor="end" font-weight="normal" >300 000</text>
<line x1="944.4" x2="1793.5" y1="306.94" y2="306.94" stroke="#d9d9d9" stroke-width="1"/>
<text x="927.70" y="311.14" font-size="15" fill="#595959" text-anchor="end" font-weight="normal" >350 000</text>
<line x1="944.4" x2="1793.5" y1="269.06" y2="269.06" stroke="#d9d9d9" stroke-width="1"/>
<text x="927.70" y="273.26" font-size="15" fill="#595959" text-anchor="end" font-weight="normal" >400 000</text>
<line x1="944.4" x2="1793.5" y1="231.18" y2="231.18" stroke="#d9d9d9" stroke-width="1"/>
<text x="927.70" y="235.38" font-size="15" fill="#595959" text-anchor="end" font-weight="normal" >450 000</text>
<line x1="944.4" x2="1793.5" y1="193.30" y2="193.30" stroke="#d9d9d9" stroke-width="1"/>
<text x="927.70" y="197.50" font-size="15" fill="#595959" text-anchor="end" font-weight="normal" >500 000</text>
<line x1="944.40" x2="944.40" y1="193.3" y2="572.1" stroke="#d9d9d9" stroke-width="1"/>
<line x1="1015.16" x2="1015.16" y1="193.3" y2="572.1" stroke="#d9d9d9" stroke-width="1"/>
<line x1="1085.92" x2="1085.92" y1="193.3" y2="572.1" stroke="#d9d9d9" stroke-width="1"/>
<line x1="1156.67" x2="1156.67" y1="193.3" y2="572.1" stroke="#d9d9d9" stroke-width="1"/>
<line x1="1227.43" x2="1227.43" y1="193.3" y2="572.1" stroke="#d9d9d9" stroke-width="1"/>
<line x1="1298.19" x2="1298.19" y1="193.3" y2="572.1" stroke="#d9d9d9" stroke-width="1"/>
<line x1="1368.95" x2="1368.95" y1="193.3" y2="572.1" stroke="#d9d9d9" stroke-width="1"/>
<line x1="1439.71" x2="1439.71" y1="193.3" y2="572.1" stroke="#d9d9d9" stroke-width="1"/>
<line x1="1510.47" x2="1510.47" y1="193.3" y2="572.1" stroke="#d9d9d9" stroke-width="1"/>
<line x1="1581.22" x2="1581.22" y1="193.3" y2="572.1" stroke="#d9d9d9" stroke-width="1"/>
<line x1="1651.98" x2="1651.98" y1="193.3" y2="572.1" stroke="#d9d9d9" stroke-width="1"/>
<line x1="1722.74" x2="1722.74" y1="193.3" y2="572.1" stroke="#d9d9d9" stroke-width="1"/>
<line x1="1793.50" x2="1793.50" y1="193.3" y2="572.1" stroke="#d9d9d9" stroke-width="1"/>
<rect x="962.05" y="224.87" width="34" height="338.75" fill="#a5a5a5"/>
<rect x="962.05" y="563.61" width="34" height="8.49" fill="#002060"/>
<rect x="1032.86" y="224.87" width="34" height="319.13" fill="#a5a5a5"/>
<rect x="1032.86" y="543.99" width="34" height="28.11" fill="#002060"/>
<rect x="1103.67" y="224.87" width="34" height="280.87" fill="#a5a5a5"/>
<rect x="1103.67" y="505.73" width="34" height="66.37" fill="#002060"/>
<rect x="1174.48" y="224.87" width="34" height="272.31" fill="#a5a5a5"/>
<rect x="1174.48" y="497.17" width="34" height="74.93" fill="#002060"/>
<rect x="1245.29" y="224.87" width="34" height="266.55" fill="#a5a5a5"/>
<rect x="1245.29" y="491.42" width="34" height="80.68" fill="#002060"/>
<rect x="1316.10" y="224.87" width="34" height="269.28" fill="#a5a5a5"/>
<rect x="1316.10" y="494.14" width="34" height="77.96" fill="#002060"/>
<rect x="1386.91" y="224.87" width="34" height="267.99" fill="#a5a5a5"/>
<rect x="1386.91" y="492.86" width="34" height="79.24" fill="#002060"/>
<rect x="1457.72" y="224.87" width="34" height="278.67" fill="#a5a5a5"/>
<rect x="1457.72" y="503.54" width="34" height="68.56" fill="#002060"/>
<rect x="1528.53" y="224.87" width="34" height="296.93" fill="#a5a5a5"/>
<rect x="1528.53" y="521.80" width="34" height="50.30" fill="#002060"/>
<rect x="1599.34" y="224.87" width="34" height="311.63" fill="#a5a5a5"/>
<rect x="1599.34" y="536.49" width="34" height="35.61" fill="#002060"/>
<rect x="1670.15" y="224.87" width="34" height="335.57" fill="#a5a5a5"/>
<rect x="1670.15" y="560.43" width="34" height="11.67" fill="#002060"/>
<rect x="1740.96" y="224.87" width="34" height="342.84" fill="#a5a5a5"/>
<rect x="1740.96" y="567.71" width="34" height="4.39" fill="#002060"/>
<rect x="948.55" y="382.49" width="61" height="23.5" fill="#7f7f7f"/>
<text x="979.05" y="399.34" font-size="14" fill="#fff" text-anchor="middle" font-weight="normal" textLength="48.5" lengthAdjust="spacingAndGlyphs">447 133</text>
<rect x="952.55" y="542" width="53" height="24" fill="#002060"/>
<text x="979.05" y="559.10" font-size="14" fill="#fff" text-anchor="middle" font-weight="normal" textLength="41.5" lengthAdjust="spacingAndGlyphs">11 200</text>
<text x="979.05" y="599.30" font-size="15" fill="#595959" text-anchor="middle" font-weight="normal" >Январь</text>
<rect x="1019.36" y="372.68" width="61" height="23.5" fill="#7f7f7f"/>
<text x="1049.86" y="389.53" font-size="14" fill="#fff" text-anchor="middle" font-weight="normal" textLength="48.5" lengthAdjust="spacingAndGlyphs">421 233</text>
<rect x="1023.36" y="542" width="53" height="24" fill="#002060"/>
<text x="1049.86" y="559.10" font-size="14" fill="#fff" text-anchor="middle" font-weight="normal" textLength="41.5" lengthAdjust="spacingAndGlyphs">37 100</text>
<text x="1049.86" y="599.30" font-size="15" fill="#595959" text-anchor="middle" font-weight="normal" >Февраль</text>
<rect x="1090.17" y="353.55" width="61" height="23.5" fill="#7f7f7f"/>
<text x="1120.67" y="370.40" font-size="14" fill="#fff" text-anchor="middle" font-weight="normal" textLength="48.5" lengthAdjust="spacingAndGlyphs">370 733</text>
<rect x="1094.17" y="542" width="53" height="24" fill="#002060"/>
<text x="1120.67" y="559.10" font-size="14" fill="#fff" text-anchor="middle" font-weight="normal" textLength="41.5" lengthAdjust="spacingAndGlyphs">87 600</text>
<text x="1120.67" y="599.30" font-size="15" fill="#595959" text-anchor="middle" font-weight="normal" >Март</text>
<rect x="1160.98" y="349.27" width="61" height="23.5" fill="#7f7f7f"/>
<text x="1191.48" y="366.12" font-size="14" fill="#fff" text-anchor="middle" font-weight="normal" textLength="48.5" lengthAdjust="spacingAndGlyphs">359 433</text>
<rect x="1164.98" y="542" width="53" height="24" fill="#002060"/>
<text x="1191.48" y="559.10" font-size="14" fill="#fff" text-anchor="middle" font-weight="normal" textLength="41.5" lengthAdjust="spacingAndGlyphs">98 900</text>
<text x="1191.48" y="599.30" font-size="15" fill="#595959" text-anchor="middle" font-weight="normal" >Апрель</text>
<rect x="1231.79" y="346.39" width="61" height="23.5" fill="#7f7f7f"/>
<text x="1262.29" y="363.24" font-size="14" fill="#fff" text-anchor="middle" font-weight="normal" textLength="48.5" lengthAdjust="spacingAndGlyphs">351 833</text>
<rect x="1231.79" y="542" width="61" height="24" fill="#002060"/>
<text x="1262.29" y="559.10" font-size="14" fill="#fff" text-anchor="middle" font-weight="normal" textLength="48.5" lengthAdjust="spacingAndGlyphs">106 500</text>
<text x="1262.29" y="599.30" font-size="15" fill="#595959" text-anchor="middle" font-weight="normal" >Май</text>
<rect x="1302.60" y="347.75" width="61" height="23.5" fill="#7f7f7f"/>
<text x="1333.10" y="364.60" font-size="14" fill="#fff" text-anchor="middle" font-weight="normal" textLength="48.5" lengthAdjust="spacingAndGlyphs">355 433</text>
<rect x="1302.60" y="542" width="61" height="24" fill="#002060"/>
<text x="1333.10" y="559.10" font-size="14" fill="#fff" text-anchor="middle" font-weight="normal" textLength="48.5" lengthAdjust="spacingAndGlyphs">102 900</text>
<text x="1333.10" y="599.30" font-size="15" fill="#595959" text-anchor="middle" font-weight="normal" >Июнь</text>
<rect x="1373.41" y="347.11" width="61" height="23.5" fill="#7f7f7f"/>
<text x="1403.91" y="363.96" font-size="14" fill="#fff" text-anchor="middle" font-weight="normal" textLength="48.5" lengthAdjust="spacingAndGlyphs">353 733</text>
<rect x="1373.41" y="542" width="61" height="24" fill="#002060"/>
<text x="1403.91" y="559.10" font-size="14" fill="#fff" text-anchor="middle" font-weight="normal" textLength="48.5" lengthAdjust="spacingAndGlyphs">104 600</text>
<text x="1403.91" y="599.30" font-size="15" fill="#595959" text-anchor="middle" font-weight="normal" >Июль</text>
<rect x="1444.22" y="352.45" width="61" height="23.5" fill="#7f7f7f"/>
<text x="1474.72" y="369.30" font-size="14" fill="#fff" text-anchor="middle" font-weight="normal" textLength="48.5" lengthAdjust="spacingAndGlyphs">367 833</text>
<rect x="1448.22" y="542" width="53" height="24" fill="#002060"/>
<text x="1474.72" y="559.10" font-size="14" fill="#fff" text-anchor="middle" font-weight="normal" textLength="41.5" lengthAdjust="spacingAndGlyphs">90 500</text>
<text x="1474.72" y="599.30" font-size="15" fill="#595959" text-anchor="middle" font-weight="normal" >Август</text>
<rect x="1515.03" y="361.58" width="61" height="23.5" fill="#7f7f7f"/>
<text x="1545.53" y="378.43" font-size="14" fill="#fff" text-anchor="middle" font-weight="normal" textLength="48.5" lengthAdjust="spacingAndGlyphs">391 933</text>
<rect x="1519.03" y="542" width="53" height="24" fill="#002060"/>
<text x="1545.53" y="559.10" font-size="14" fill="#fff" text-anchor="middle" font-weight="normal" textLength="41.5" lengthAdjust="spacingAndGlyphs">66 400</text>
<text x="1545.53" y="599.30" font-size="15" fill="#595959" text-anchor="middle" font-weight="normal" >Сентябрь</text>
<rect x="1585.84" y="368.93" width="61" height="23.5" fill="#7f7f7f"/>
<text x="1616.34" y="385.78" font-size="14" fill="#fff" text-anchor="middle" font-weight="normal" textLength="48.5" lengthAdjust="spacingAndGlyphs">411 333</text>
<rect x="1589.84" y="542" width="53" height="24" fill="#002060"/>
<text x="1616.34" y="559.10" font-size="14" fill="#fff" text-anchor="middle" font-weight="normal" textLength="41.5" lengthAdjust="spacingAndGlyphs">47 000</text>
<text x="1616.34" y="599.30" font-size="15" fill="#595959" text-anchor="middle" font-weight="normal" >Октябрь</text>
<rect x="1656.65" y="380.90" width="61" height="23.5" fill="#7f7f7f"/>
<text x="1687.15" y="397.75" font-size="14" fill="#fff" text-anchor="middle" font-weight="normal" textLength="48.5" lengthAdjust="spacingAndGlyphs">442 933</text>
<rect x="1660.65" y="542" width="53" height="24" fill="#002060"/>
<text x="1687.15" y="559.10" font-size="14" fill="#fff" text-anchor="middle" font-weight="normal" textLength="41.5" lengthAdjust="spacingAndGlyphs">15 400</text>
<text x="1687.15" y="599.30" font-size="15" fill="#595959" text-anchor="middle" font-weight="normal" >Ноябрь</text>
<rect x="1727.46" y="384.54" width="61" height="23.5" fill="#7f7f7f"/>
<text x="1757.96" y="401.39" font-size="14" fill="#fff" text-anchor="middle" font-weight="normal" textLength="48.5" lengthAdjust="spacingAndGlyphs">452 533</text>
<rect x="1734.96" y="542" width="46" height="24" fill="#002060"/>
<text x="1757.96" y="559.10" font-size="14" fill="#fff" text-anchor="middle" font-weight="normal" textLength="34.5" lengthAdjust="spacingAndGlyphs">5 800</text>
<text x="1757.96" y="599.30" font-size="15" fill="#595959" text-anchor="middle" font-weight="normal" >Декабрь</text>
<text x="0.00" y="0.00" font-size="13" fill="#595959" text-anchor="middle" font-weight="bold" textLength="39.7" lengthAdjust="spacingAndGlyphs" transform="translate(861,382) rotate(-90)">кВт*ч</text>
<rect x="1068" y="655" width="10" height="9" fill="#002060"/>
<text x="1082.70" y="664.30" font-size="15" fill="#595959" text-anchor="start" font-weight="normal" textLength="204.3" lengthAdjust="spacingAndGlyphs">Выработка э/энергии от СЭС</text>
<rect x="1411" y="655" width="9" height="9" fill="#a5a5a5"/>
<text x="1424.70" y="664.30" font-size="15" fill="#595959" text-anchor="start" font-weight="normal" textLength="224" lengthAdjust="spacingAndGlyphs">Общее потребление э/энергии</text>
<rect x="844.5" y="697.5" width="967.3" height="461.7" fill="#fff" stroke="#d9d9d9" stroke-width="1"/>
<text x="1327.70" y="730.00" font-size="16" fill="#7f7f7f" text-anchor="middle" font-weight="bold" textLength="716" lengthAdjust="spacingAndGlyphs">Доля лизинговых платежей в среднегодовом экономическом эффекте от эксплуатации СЭС</text>
<text x="1327.80" y="752.30" font-size="16" fill="#7f7f7f" text-anchor="middle" font-weight="bold" textLength="482" lengthAdjust="spacingAndGlyphs">базовые расчетные условия лизинга: 10% аванс, лизинг 5 лет.</text>
<rect x="954.1" y="780.2" width="835.4" height="288.0999999999999" fill="url(#hatch)"/>
<line x1="954.1" x2="1789.5" y1="1068.30" y2="1068.30" stroke="#d9d9d9" stroke-width="1"/>
<text x="938.40" y="1072.60" font-size="15" fill="#595959" text-anchor="end" font-weight="normal" >0</text>
<line x1="954.1" x2="1789.5" y1="1047.72" y2="1047.72" stroke="#d9d9d9" stroke-width="1"/>
<text x="938.40" y="1052.02" font-size="15" fill="#595959" text-anchor="end" font-weight="normal" >100 000</text>
<line x1="954.1" x2="1789.5" y1="1027.14" y2="1027.14" stroke="#d9d9d9" stroke-width="1"/>
<text x="938.40" y="1031.44" font-size="15" fill="#595959" text-anchor="end" font-weight="normal" >200 000</text>
<line x1="954.1" x2="1789.5" y1="1006.56" y2="1006.56" stroke="#d9d9d9" stroke-width="1"/>
<text x="938.40" y="1010.86" font-size="15" fill="#595959" text-anchor="end" font-weight="normal" >300 000</text>
<line x1="954.1" x2="1789.5" y1="985.99" y2="985.99" stroke="#d9d9d9" stroke-width="1"/>
<text x="938.40" y="990.29" font-size="15" fill="#595959" text-anchor="end" font-weight="normal" >400 000</text>
<line x1="954.1" x2="1789.5" y1="965.41" y2="965.41" stroke="#d9d9d9" stroke-width="1"/>
<text x="938.40" y="969.71" font-size="15" fill="#595959" text-anchor="end" font-weight="normal" >500 000</text>
<line x1="954.1" x2="1789.5" y1="944.83" y2="944.83" stroke="#d9d9d9" stroke-width="1"/>
<text x="938.40" y="949.13" font-size="15" fill="#595959" text-anchor="end" font-weight="normal" >600 000</text>
<line x1="954.1" x2="1789.5" y1="924.25" y2="924.25" stroke="#d9d9d9" stroke-width="1"/>
<text x="938.40" y="928.55" font-size="15" fill="#595959" text-anchor="end" font-weight="normal" >700 000</text>
<line x1="954.1" x2="1789.5" y1="903.67" y2="903.67" stroke="#d9d9d9" stroke-width="1"/>
<text x="938.40" y="907.97" font-size="15" fill="#595959" text-anchor="end" font-weight="normal" >800 000</text>
<line x1="954.1" x2="1789.5" y1="883.09" y2="883.09" stroke="#d9d9d9" stroke-width="1"/>
<text x="938.40" y="887.39" font-size="15" fill="#595959" text-anchor="end" font-weight="normal" >900 000</text>
<line x1="954.1" x2="1789.5" y1="862.51" y2="862.51" stroke="#d9d9d9" stroke-width="1"/>
<text x="938.40" y="866.81" font-size="15" fill="#595959" text-anchor="end" font-weight="normal" >1 000 000</text>
<line x1="954.1" x2="1789.5" y1="841.94" y2="841.94" stroke="#d9d9d9" stroke-width="1"/>
<text x="938.40" y="846.24" font-size="15" fill="#595959" text-anchor="end" font-weight="normal" >1 100 000</text>
<line x1="954.1" x2="1789.5" y1="821.36" y2="821.36" stroke="#d9d9d9" stroke-width="1"/>
<text x="938.40" y="825.66" font-size="15" fill="#595959" text-anchor="end" font-weight="normal" >1 200 000</text>
<line x1="954.1" x2="1789.5" y1="800.78" y2="800.78" stroke="#d9d9d9" stroke-width="1"/>
<text x="938.40" y="805.08" font-size="15" fill="#595959" text-anchor="end" font-weight="normal" >1 300 000</text>
<line x1="954.1" x2="1789.5" y1="780.20" y2="780.20" stroke="#d9d9d9" stroke-width="1"/>
<text x="938.40" y="784.50" font-size="15" fill="#595959" text-anchor="end" font-weight="normal" >1 400 000</text>
<line x1="954.1" x2="954.1" y1="780.2" y2="1068.3" stroke="#d9d9d9" stroke-width="1"/>
<line x1="1789.5" x2="1789.5" y1="780.2" y2="1068.3" stroke="#d9d9d9" stroke-width="1"/>
<rect x="972.91" y="1040.28" width="32" height="28.02" fill="#002060"/>
<rect x="1042.53" y="975.50" width="32" height="92.80" fill="#002060"/>
<rect x="1112.14" y="849.17" width="32" height="219.13" fill="#002060"/>
<rect x="1181.76" y="820.91" width="32" height="247.39" fill="#002060"/>
<rect x="1251.38" y="801.90" width="32" height="266.40" fill="#002060"/>
<rect x="1320.99" y="810.90" width="32" height="257.40" fill="#002060"/>
<rect x="1390.61" y="806.65" width="32" height="261.65" fill="#002060"/>
<rect x="1460.22" y="841.92" width="32" height="226.38" fill="#002060"/>
<rect x="1529.84" y="902.20" width="32" height="166.10" fill="#002060"/>
<rect x="1599.46" y="950.73" width="32" height="117.57" fill="#002060"/>
<rect x="1669.07" y="1029.78" width="32" height="38.52" fill="#002060"/>
<rect x="1738.69" y="1053.79" width="32" height="14.51" fill="#002060"/>
<line x1="988.91" x2="1754.69" y1="919.78" y2="919.78" stroke="#bf9000" stroke-width="3"/>
<text x="988.91" y="1025.98" font-size="15" fill="#404040" text-anchor="middle" font-weight="normal" >136 143</text>
<text x="988.91" y="1095.30" font-size="15" fill="#595959" text-anchor="middle" font-weight="normal" >Январь</text>
<text x="1058.53" y="961.20" font-size="15" fill="#404040" text-anchor="middle" font-weight="normal" >450 973</text>
<text x="1058.53" y="1095.30" font-size="15" fill="#595959" text-anchor="middle" font-weight="normal" >Февраль</text>
<text x="1128.14" y="834.87" font-size="15" fill="#404040" text-anchor="middle" font-weight="normal" >1 064 832</text>
<text x="1128.14" y="1095.30" font-size="15" fill="#595959" text-anchor="middle" font-weight="normal" >Март</text>
<text x="1197.76" y="806.61" font-size="15" fill="#404040" text-anchor="middle" font-weight="normal" >1 202 190</text>
<text x="1197.76" y="1095.30" font-size="15" fill="#595959" text-anchor="middle" font-weight="normal" >Апрель</text>
<text x="1267.38" y="787.60" font-size="15" fill="#404040" text-anchor="middle" font-weight="normal" >1 294 573</text>
<text x="1267.38" y="1095.30" font-size="15" fill="#595959" text-anchor="middle" font-weight="normal" >Май</text>
<text x="1336.99" y="796.60" font-size="15" fill="#404040" text-anchor="middle" font-weight="normal" >1 250 813</text>
<text x="1336.99" y="1095.30" font-size="15" fill="#595959" text-anchor="middle" font-weight="normal" >Июнь</text>
<text x="1406.61" y="792.35" font-size="15" fill="#404040" text-anchor="middle" font-weight="normal" >1 271 477</text>
<text x="1406.61" y="1095.30" font-size="15" fill="#595959" text-anchor="middle" font-weight="normal" >Июль</text>
<text x="1476.22" y="827.62" font-size="15" fill="#404040" text-anchor="middle" font-weight="normal" >1 100 083</text>
<text x="1476.22" y="1095.30" font-size="15" fill="#595959" text-anchor="middle" font-weight="normal" >Август</text>
<text x="1545.84" y="887.90" font-size="15" fill="#404040" text-anchor="middle" font-weight="normal" >807 133</text>
<text x="1545.84" y="1095.30" font-size="15" fill="#595959" text-anchor="middle" font-weight="normal" >Сентябрь</text>
<text x="1615.46" y="936.43" font-size="15" fill="#404040" text-anchor="middle" font-weight="normal" >571 314</text>
<text x="1615.46" y="1095.30" font-size="15" fill="#595959" text-anchor="middle" font-weight="normal" >Октябрь</text>
<text x="1685.07" y="1015.48" font-size="15" fill="#404040" text-anchor="middle" font-weight="normal" >187 196</text>
<text x="1685.07" y="1095.30" font-size="15" fill="#595959" text-anchor="middle" font-weight="normal" >Ноябрь</text>
<text x="1754.69" y="1039.49" font-size="15" fill="#404040" text-anchor="middle" font-weight="normal" >70 503</text>
<text x="1754.69" y="1095.30" font-size="15" fill="#595959" text-anchor="middle" font-weight="normal" >Декабрь</text>
<rect x="1721" y="906.3" width="67.2" height="25.2" fill="#f4b183"/>
<text x="1754.60" y="924.20" font-size="15" fill="#404040" text-anchor="middle" font-weight="normal" >725 138</text>
<text x="0.00" y="0.00" font-size="14" fill="#595959" text-anchor="middle" font-weight="bold" transform="translate(866.3,873.5) rotate(-90)">Руб.</text>
<rect x="1030" y="1132.3" width="36" height="8.3" fill="#002060"/>
<text x="1070.40" y="1141.30" font-size="15" fill="#595959" text-anchor="start" font-weight="normal" textLength="322.6" lengthAdjust="spacingAndGlyphs">Экономический эффект от эксплуатации СЭС</text>
<line x1="1439" x2="1478" y1="1136" y2="1136" stroke="#bf9000" stroke-width="3"/>
<text x="1480.60" y="1141.30" font-size="15" fill="#595959" text-anchor="start" font-weight="normal" textLength="153" lengthAdjust="spacingAndGlyphs">Лизинговые платежи</text>
<rect x="1816.5" y="109.5" width="503" height="1048.8" fill="#fff" stroke="#d9d9d9" stroke-width="1"/>
<text x="1965.50" y="252.40" font-size="17" fill="#404040" text-anchor="middle" font-weight="normal" textLength="127" lengthAdjust="spacingAndGlyphs">Экономический</text>
<text x="1965.50" y="275.40" font-size="17" fill="#404040" text-anchor="middle" font-weight="normal" textLength="78.5" lengthAdjust="spacingAndGlyphs">эффект от</text>
<text x="1965.50" y="298.40" font-size="17" fill="#404040" text-anchor="middle" font-weight="normal" textLength="109" lengthAdjust="spacingAndGlyphs">эксплуатации</text>
<text x="1965.50" y="321.50" font-size="17" fill="#404040" text-anchor="middle" font-weight="normal" textLength="77.5" lengthAdjust="spacingAndGlyphs">СЭС, руб.;</text>
<text x="1965.50" y="344.20" font-size="17" fill="#404040" text-anchor="middle" font-weight="normal" textLength="94" lengthAdjust="spacingAndGlyphs">695 490 904</text>
<path d="M1859.0,491 A207.5,100.5 0 0 0 2055.5,591.4 L2055.5,635.87 A207.5,96 0 0 1 1859.0,540 Z" fill="url(#pieL)"/>
<path d="M2141,584.8 A207.5,100.5 0 0 0 2274.0,491 L2274.0,536 A207.5,96 0 0 1 2141,625.60 Z" fill="#454545"/>
<polygon points="2066.5,485.5 2141,584.8 2141,625.60 2066.5,528.5 " fill="#4a4a4a"/>
<polygon points="2066.5,485.5 2055.5,591.4 2055.5,635.87 2066.5,528.5" fill="#8a8a8a"/>
<path d="M2066.5,485.5 L2141,584.8 A207.5,100.5 0 1 0 2055.5,591.4 Z" fill="#a5a5a5" stroke="#fff" stroke-width="1.5" stroke-linejoin="miter"/>
<path d="M1859.0,491 L1859.0,534 A207.5,100.5 0 0 0 2055.5,634.4" fill="none" stroke="#fff" stroke-width="0"/>
<polygon points="2065.5,528.5 2076,528.5 2064.4,640 2054.5,640" fill="#fff"/>
<path d="M2064.4,616.2 A215,105 0 0 0 2142.5,610.3 L2142.5,655.7 A215,105 0 0 1 2064.4,661.6 Z" fill="#001133" stroke="#fff" stroke-width="1"/>
<path d="M2073.2,508.6 L2142.5,610.3 A215,105 0 0 1 2064.4,616.2 Z" fill="#002060" stroke="#fff" stroke-width="1.5"/>
<polygon points="2074.5,510 2078,506.5 2153.5,609 2153.5,656 2143.5,657 2143.5,611" fill="#fff"/>
<line x1="2076.3" y1="511.5" x2="2146" y2="608.5" stroke="#4a2200" stroke-width="2.8"/>
<line x1="2079.5" y1="509" x2="2151.2" y2="607.8" stroke="#c55a11" stroke-width="2.8"/>
<rect x="2144.4" y="610.4" width="3.4" height="43" fill="#4a2200"/>
<rect x="2144.4" y="610.4" width="0.8" height="43" fill="#c55a11"/>
<rect x="2149" y="611.7" width="3.8" height="43.3" fill="#4a2200"/>
<line x1="2103.5" y1="662" x2="2103.5" y2="726.3" stroke="#a6a6a6" stroke-width="1"/>
<polyline points="2149,654.4 2175.6,758 2184.7,758" fill="none" stroke="#a6a6a6" stroke-width="1"/>
<text x="2125.60" y="715.60" font-size="17" fill="#404040" text-anchor="middle" font-weight="normal" textLength="97" lengthAdjust="spacingAndGlyphs">Лизинговые</text>
<text x="2125.70" y="738.30" font-size="17" fill="#404040" text-anchor="middle" font-weight="normal" textLength="72" lengthAdjust="spacingAndGlyphs">платежи,</text>
<text x="2126.00" y="761.80" font-size="17" fill="#404040" text-anchor="middle" font-weight="normal" textLength="37" lengthAdjust="spacingAndGlyphs">руб.;</text>
<text x="2125.70" y="783.70" font-size="17" fill="#404040" text-anchor="middle" font-weight="normal" textLength="84.2" lengthAdjust="spacingAndGlyphs">43 508 251</text>
<text x="2231.90" y="727.00" font-size="17" fill="#404040" text-anchor="middle" font-weight="normal" textLength="87.8" lengthAdjust="spacingAndGlyphs">Авансовый</text>
<text x="2232.30" y="750.50" font-size="17" fill="#404040" text-anchor="middle" font-weight="normal" textLength="81.7" lengthAdjust="spacingAndGlyphs">платеж по</text>
<text x="2232.00" y="773.00" font-size="17" fill="#404040" text-anchor="middle" font-weight="normal" textLength="109.8" lengthAdjust="spacingAndGlyphs">лизингу, руб.;</text>
<text x="2232.10" y="795.00" font-size="17" fill="#404040" text-anchor="middle" font-weight="normal" textLength="74.2" lengthAdjust="spacingAndGlyphs">3 041 111</text>
<rect x="1859" y="1005.7" width="7" height="7" fill="#c55a11"/>
<text x="1874.00" y="1015.50" font-size="17.5" fill="#595959" text-anchor="start" font-weight="normal" textLength="299" lengthAdjust="spacingAndGlyphs">Авансовый платеж по лизингу, руб.</text>
<rect x="1859" y="1040.4" width="7" height="7" fill="#002060"/>
<text x="1874.00" y="1050.20" font-size="17.5" fill="#595959" text-anchor="start" font-weight="normal" textLength="224" lengthAdjust="spacingAndGlyphs">Лизинговые платежи, руб.</text>
<rect x="1859" y="1074.7" width="7" height="7" fill="#a5a5a5"/>
<text x="1874.00" y="1084.50" font-size="17.5" fill="#595959" text-anchor="start" font-weight="normal" textLength="420" lengthAdjust="spacingAndGlyphs">Экономический эффект от эксплуатации СЭС, руб.</text>
</svg>
</body></html>
